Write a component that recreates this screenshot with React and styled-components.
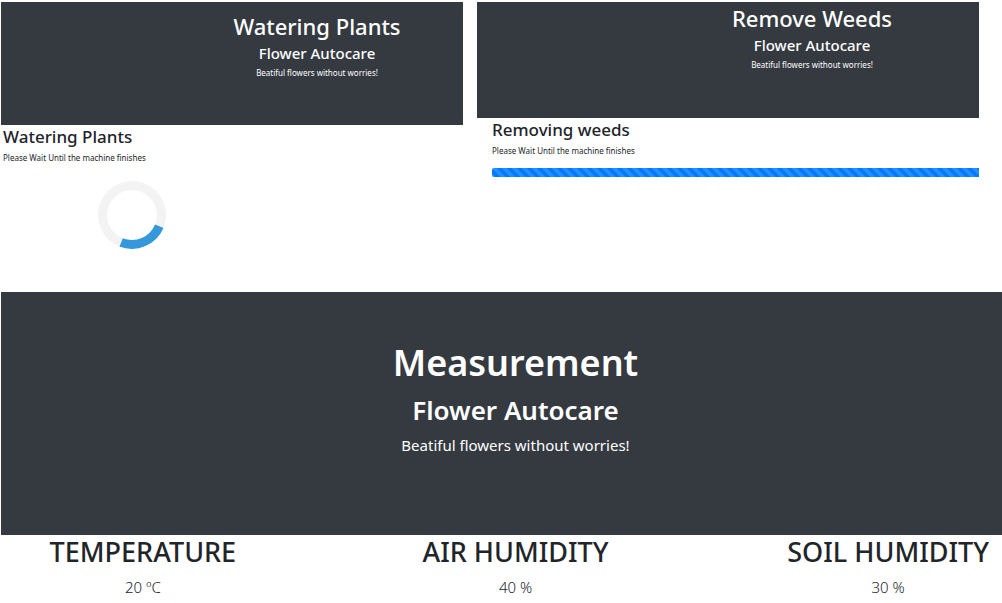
import React from "react";
import styled, { createGlobalStyle } from "styled-components";

const GlobalStyle = createGlobalStyle`
  *, *::before, *::after { box-sizing: border-box; }
  body {
    margin: 0;
    background: #fff;
    color: #212529;
    font-family: "Noto Sans", "Open Sans", sans-serif;
  }
  h1, h2, h3, p, dl, dt, dd { margin: 0; }
`;

const Page = styled.main`
  padding: 2px 0 4px 1px;
`;

const Tasks = styled.div`
  display: grid;
  grid-template-columns: 462fr 502fr;
  column-gap: 14px;
  min-height: 290px;
  padding-right: 23px;
`;

const Hero = styled.header`
  display: flex;
  flex-direction: column;
  align-items: center;
  gap: ${(p) => (p.$large ? 5 : 2)}px;
  min-height: ${(p) => (p.$large ? 243 : p.$raised ? 116 : 123)}px;
  padding: ${(p) => (p.$large ? "47px 0 0 28px" : p.$raised ? "1px 0 0 168px" : "9px 0 0 170px")};
  background: #343a40;
  color: #fff;
  text-align: center;
`;

const HeroTitle = styled.h1`
  font-size: ${(p) => (p.$large ? 36 : 22)}px;
  line-height: ${(p) => (p.$large ? 48 : 30)}px;
  font-weight: ${(p) => (p.$large ? 600 : 500)};
`;

const HeroBrand = styled.h2`
  font-size: ${(p) => (p.$large ? 26 : 15)}px;
  line-height: ${(p) => (p.$large ? 36 : 20)}px;
  font-weight: ${(p) => (p.$large ? 600 : 500)};
`;

const HeroTagline = styled.p`
  font-size: ${(p) => (p.$large ? 15 : 8)}px;
  line-height: ${(p) => (p.$large ? 24 : 16)}px;
`;

const TaskBody = styled.div`
  padding-left: ${(p) => (p.$inset ? 15 : 2)}px;
`;

const TaskTitle = styled.h3`
  margin-bottom: 3px;
  font-size: 17px;
  line-height: 24px;
  font-weight: 500;
`;

const TaskNote = styled.p`
  font-size: 8px;
  line-height: 12px;
`;

const Spinner = styled.div`
  width: 68px;
  height: 68px;
  margin: 17px 0 0 95px;
  border: 9px solid #f3f3f3;
  border-bottom-color: #3498db;
  border-radius: 50%;
  transform: rotate(-23deg);
`;

const Progress = styled.progress`
  display: block;
  width: 100%;
  height: 9px;
  margin-top: 11px;
  border: 0;
  border-radius: 2px 0 0 2px;
  overflow: hidden;
  appearance: none;

  &::-webkit-progress-bar { background: #e9ecef; }
  &::-webkit-progress-value {
    background-color: #007bff;
    background-image: linear-gradient(
      45deg,
      rgba(255, 255, 255, 0.15) 25%, transparent 25%,
      transparent 50%, rgba(255, 255, 255, 0.15) 50%,
      rgba(255, 255, 255, 0.15) 75%, transparent 75%
    );
    background-size: 10px 10px;
  }
`;

const Readings = styled.dl`
  display: grid;
  grid-template-columns: 228fr 518fr 228fr;
  padding-left: 28px;
  text-align: center;
`;

const ReadingName = styled.dt`
  margin-bottom: 6px;
  font-size: 27px;
  line-height: 34px;
  font-weight: 500;
  white-space: nowrap;
`;

const ReadingValue = styled.dd`
  font-size: 15px;
  line-height: 24px;
  font-weight: 300;
`;

function Banner({ title, large, raised }) {
  return (
    <Hero $large={large} $raised={raised}>
      <HeroTitle $large={large}>{title}</HeroTitle>
      <HeroBrand $large={large}>Flower Autocare</HeroBrand>
      <HeroTagline $large={large}>Beatiful flowers without worries!</HeroTagline>
    </Hero>
  );
}

const readings = [
  { name: "TEMPERATURE", value: "20 ºC" },
  { name: "AIR HUMIDITY", value: "40 %" },
  { name: "SOIL HUMIDITY", value: "30 %" },
];

export default function App() {
  return (
    <>
      <GlobalStyle />
      <Page>
        <Tasks>
          <section>
            <Banner title="Watering Plants" />
            <TaskBody>
              <TaskTitle>Watering Plants</TaskTitle>
              <TaskNote>Please Wait Until the machine finishes</TaskNote>
              <Spinner role="status" aria-label="Watering Plants" />
            </TaskBody>
          </section>
          <section>
            <Banner title="Remove Weeds" raised />
            <TaskBody $inset>
              <TaskTitle id="weeds">Removing weeds</TaskTitle>
              <TaskNote>Please Wait Until the machine finishes</TaskNote>
              <Progress aria-labelledby="weeds" max="100" value="100" />
            </TaskBody>
          </section>
        </Tasks>
        <section>
          <Banner title="Measurement" large />
          <Readings>
            {readings.map((r) => (
              <div key={r.name}>
                <ReadingName>{r.name}</ReadingName>
                <ReadingValue>{r.value}</ReadingValue>
              </div>
            ))}
          </Readings>
        </section>
      </Page>
    </>
  );
}
